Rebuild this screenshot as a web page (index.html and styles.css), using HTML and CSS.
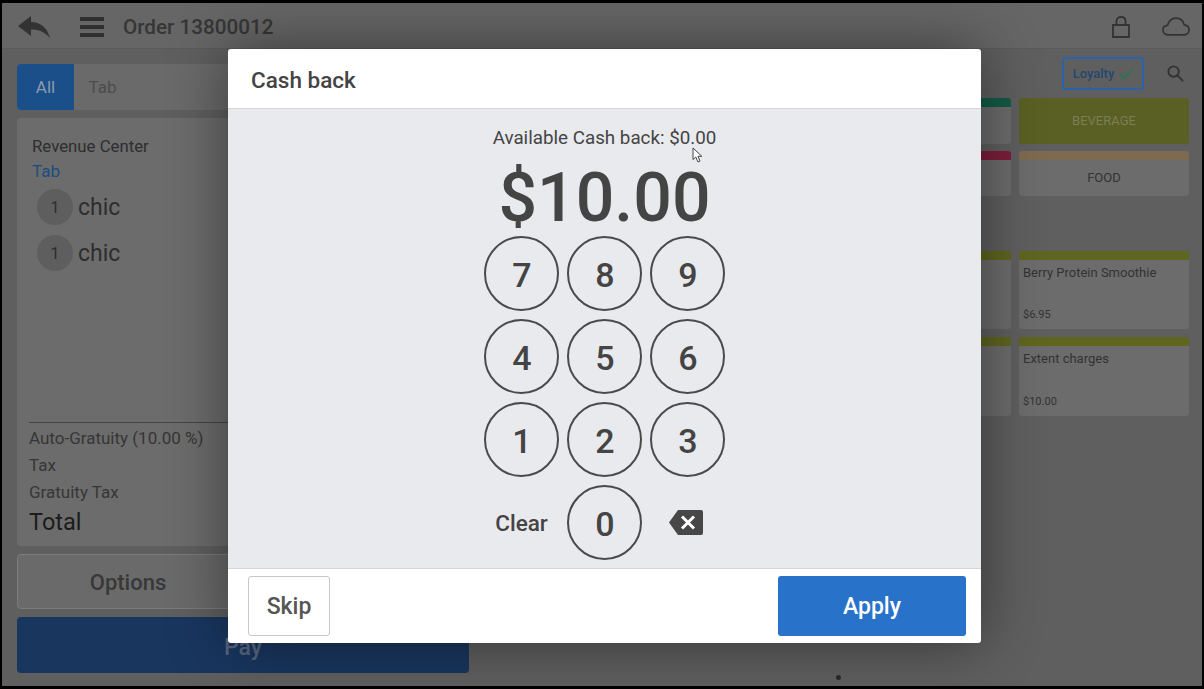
FILE: index.html
```html
<!DOCTYPE html>
<html lang="en">
<head>
  <meta charset="UTF-8">
  <title>Order 13800012 - Cash back</title>
  <link rel="stylesheet" href="styles.css">
</head>
<body>
  <div class="screen">
    <div class="topbar">
      <svg class="back-icon" viewBox="0 0 32 22"><path d="M0 10 L13 0 V6 C22 6 29 11 32 22 C27 16 21 13.500 13 13.500 V20 Z"/></svg>
      <div class="menu-icon"><span></span><span></span><span></span></div>
      <div class="order-title">Order 13800012</div>
      <div class="topbar-right">
        <svg class="lock-icon" viewBox="0 0 18 22"><path d="M1 9 H17 V21 H1 Z M4.500 9 V5 C4.500 2.500 6.500 1 9 1 C11.500 1 13.500 2.500 13.500 5 V9"/></svg>
        <svg class="cloud-icon" viewBox="0 0 30 20"><path d="M7 19 C3.500 19 1 16.800 1 13.800 C1 11 3.200 9 6 8.800 C7.200 4 10.800 1 15 1 C19.500 1 22.800 4 23.800 8.300 C27 8.600 29 10.800 29 13.800 C29 16.800 26.500 19 23 19 Z"/></svg>
      </div>
    </div>

    <div class="main">
      <div class="order-col">
        <div class="tabs">
          <div class="tab tab-active">All</div>
          <div class="tab">Tab</div>
        </div>
        <div class="order-panel">
          <div class="revenue-label">Revenue Center</div>
          <div class="revenue-value">Tab</div>
          <div class="order-item"><span class="qty">1</span><span>chic</span></div>
          <div class="order-item"><span class="qty">1</span><span>chic</span></div>
          <div class="totals">
            <div class="total-line">Auto-Gratuity (10.00 %)</div>
            <div class="total-line">Tax</div>
            <div class="total-line">Gratuity Tax</div>
            <div class="total-big">Total</div>
          </div>
        </div>
        <div class="options-button">Options</div>
        <div class="pay-button">Pay</div>
      </div>

      <div class="menu-col">
        <div class="menu-tools">
          <div class="loyalty">Loyalty
            <svg class="check-icon" viewBox="0 0 16 13"><path d="M1 7 L5.500 11.500 L15 1"/></svg>
          </div>
          <svg class="search-icon" viewBox="0 0 18 18"><circle cx="7" cy="7" r="5.500"/><path d="M11 11 L17 17"/></svg>
        </div>
        <div class="tile-grid">
          <div class="tile stripe-green"></div>
          <div class="tile tile-beverage">BEVERAGE</div>
          <div class="tile stripe-pink"></div>
          <div class="tile stripe-brown tile-center">FOOD</div>
        </div>
        <div class="tile-grid tile-grid-items">
          <div class="tile stripe-olive tile-item">
            <div>Peanut Butter Protein</div>
          </div>
          <div class="tile stripe-olive tile-item">
            <div>Berry Protein Smoothie</div>
            <div class="tile-price">$6.95</div>
          </div>
          <div class="tile stripe-olive tile-item"></div>
          <div class="tile stripe-olive tile-item">
            <div>Extent charges</div>
            <div class="tile-price">$10.00</div>
          </div>
        </div>
        <div class="page-dot"></div>
      </div>
    </div>

    <div class="modal">
      <div class="modal-header">Cash back</div>
      <div class="modal-body">
        <div class="available">Available Cash back: $0.00</div>
        <div class="amount">$10.00</div>
        <div class="keypad">
          <div class="key">7</div>
          <div class="key">8</div>
          <div class="key">9</div>
          <div class="key">4</div>
          <div class="key">5</div>
          <div class="key">6</div>
          <div class="key">1</div>
          <div class="key">2</div>
          <div class="key">3</div>
          <div class="key-plain">Clear</div>
          <div class="key">0</div>
          <div class="key-plain">
            <svg class="backspace-icon" viewBox="0 0 34 25">
              <path class="backspace-shape" d="M9 0 H32 Q34 0 34 2 V23 Q34 25 32 25 H9 L0 12.500 Z"/>
              <path class="backspace-x" d="M13 6.500 L25 18.500 M25 6.500 L13 18.500"/>
            </svg>
          </div>
        </div>
      </div>
      <div class="modal-footer">
        <div class="btn btn-skip">Skip</div>
        <div class="btn btn-apply">Apply</div>
      </div>
    </div>

    <svg class="cursor" viewBox="0 0 11 16"><path d="M1 1 V12.500 L3.800 10 L6 15 L8 14 L6 9.300 L9.800 9.300 Z"/></svg>
  </div>
</body>
</html>
```

FILE: styles.css
```css
body {
  margin: 0;
  background: #000;
  font-family: Roboto, sans-serif;
  overflow: hidden;
}

/* everything behind the dialog is drawn in its dimmed colours */
.screen {
  position: relative;
  width: 1200px;
  height: 683px;
  margin: 3px 2px;
  background: #5f5f5f;
  color: #2e2e2e;
  overflow: hidden;
}

/* top bar */
.topbar {
  display: flex;
  align-items: center;
  height: 43px;
  padding: 2px 12px 0 16px;
  background: #666;
  border-bottom: 1px solid #5a5a5a;
}

.back-icon {
  width: 32px;
  height: 22px;
  fill: #333;
  margin-right: 30px;
}

.menu-icon {
  display: flex;
  flex-direction: column;
  gap: 4px;
  width: 24px;
  margin-right: 19px;
}

.menu-icon span {
  height: 4px;
  background: #303030;
}

.order-title {
  font-size: 20.700px;
  font-weight: 500;
  color: #363636;
}

.topbar-right {
  display: flex;
  align-items: center;
  gap: 32px;
  margin-left: auto;
}

.lock-icon {
  width: 18px;
  height: 22px;
  fill: none;
  stroke: #333;
  stroke-width: 1.800;
}

.cloud-icon {
  width: 28px;
  height: 19px;
  fill: none;
  stroke: #333;
  stroke-width: 1.800;
}

/* main columns */
.main {
  display: flex;
  justify-content: space-between;
  padding: 8px 13px 0 15px;
}

.order-col {
  width: 452px;
  padding-top: 7px;
}

.tabs {
  display: flex;
  height: 46px;
  background: #6a6a6a;
  border-radius: 4px;
  margin-bottom: 8px;
}

.tab {
  display: flex;
  align-items: center;
  justify-content: center;
  width: 57px;
  font-size: 17px;
  color: #4c4c4c;
}

.tab-active {
  background: #1b4f8a;
  color: #8d9aaa;
  border-radius: 4px 0 0 4px;
}

.order-panel {
  display: flex;
  flex-direction: column;
  height: 428px;
  box-sizing: border-box;
  padding: 18px 12px 0;
  background: #6c6c6c;
  border-radius: 4px;
  margin-bottom: 8px;
}

.revenue-label {
  font-size: 16.800px;
  line-height: 20px;
  padding-left: 3px;
}

.revenue-value {
  font-size: 17px;
  line-height: 26px;
  margin-top: 2px;
  padding-left: 3px;
  color: #1d4c80;
}

.order-item {
  display: flex;
  align-items: center;
  gap: 5px;
  height: 46px;
  padding-left: 8px;
  font-size: 23px;
}

.qty {
  display: flex;
  align-items: center;
  justify-content: center;
  width: 36px;
  height: 36px;
  border-radius: 50%;
  background: #5e5e5e;
  font-size: 16px;
}

.totals {
  margin-top: auto;
  padding-top: 2px;
  padding-bottom: 7px;
  border-top: 1px solid #444;
  font-size: 17px;
  color: #363636;
}

.total-line {
  line-height: 27px;
}

.total-big {
  font-size: 23.500px;
  line-height: 33px;
  color: #1c1c1c;
}

.options-button {
  display: flex;
  align-items: center;
  justify-content: center;
  height: 55px;
  box-sizing: border-box;
  padding: 1px 230px 0 0;
  margin-bottom: 8px;
  background: #6a6a6a;
  border: 1px solid #7c7c7c;
  border-radius: 4px;
  font-size: 22px;
  font-weight: 500;
  color: #383838;
}

.pay-button {
  display: flex;
  align-items: center;
  justify-content: center;
  height: 56px;
  background: #19365f;
  border-radius: 4px;
  font-size: 23px;
  font-weight: 500;
  padding-top: 4px;
  box-sizing: border-box;
  color: #56677f;
}

/* menu side */
.menu-col {
  position: relative;
  width: 348px;
}

.menu-tools {
  display: flex;
  justify-content: flex-end;
  align-items: center;
  gap: 23px;
  height: 33px;
  margin-bottom: 8px;
  padding-right: 5px;
}

.loyalty {
  display: flex;
  align-items: center;
  justify-content: center;
  gap: 5px;
  width: 82px;
  height: 33px;
  box-sizing: border-box;
  border: 2px solid #2a63a8;
  border-radius: 4px;
  font-size: 13px;
  font-weight: 500;
  color: #24486f;
}

.check-icon {
  width: 14px;
  height: 12px;
  fill: none;
  stroke: #1f7a50;
  stroke-width: 1.700;
}

.search-icon {
  width: 17px;
  height: 17px;
  fill: none;
  stroke: #333;
  stroke-width: 2;
}

.tile-grid {
  display: grid;
  grid-template-columns: 170px 170px;
  grid-template-rows: 46px 45px;
  gap: 7px 8px;
  margin-bottom: 55px;
}

.tile-grid-items {
  grid-template-rows: 78px 79px;
  gap: 8px;
}

.tile {
  box-sizing: border-box;
  background: #6c6c6c;
  border-radius: 3px;
  border-top: 9px solid transparent;
  font-size: 13px;
  color: #333;
}

.stripe-green { border-top-color: #145c46; }
.stripe-pink { border-top-color: #7e1e3c; }
.stripe-brown { border-top-color: #7d6a50; }
.stripe-olive { border-top-color: #60651f; }

.tile-beverage {
  display: flex;
  align-items: center;
  justify-content: center;
  padding-bottom: 2px;
  border-top: 0;
  background: #5a5f23;
  color: #7b7e56;
}

.tile-center {
  display: flex;
  align-items: center;
  justify-content: center;
  padding-bottom: 2px;
}

.tile-item {
  display: flex;
  flex-direction: column;
  padding: 5px 4px 8px;
  white-space: nowrap;
}

.tile-price {
  font-size: 11px;
  margin-top: auto;
}

.page-dot {
  position: absolute;
  left: -5px;
  top: 618px;
  width: 5px;
  height: 5px;
  border-radius: 50%;
  background: #2a2a2a;
}

/* cash back dialog */
.modal {
  position: absolute;
  left: 226px;
  top: 46px;
  width: 753px;
  height: 594px;
  display: flex;
  flex-direction: column;
  background: #fff;
  border-radius: 3px;
  box-shadow: 0 0 60px rgba(0, 0, 0, 0.45);
  color: #444;
}

.modal-header {
  display: flex;
  align-items: center;
  height: 60px;
  padding: 2px 0 0 23px;
  box-sizing: border-box;
  font-size: 22.500px;
  font-weight: 500;
  border-bottom: 1px solid #d6d6d6;
}

.modal-body {
  flex: 1;
  display: flex;
  flex-direction: column;
  align-items: center;
  background: #e9eaee;
  border-bottom: 1px solid #d6d6d6;
}

.available {
  font-size: 18.800px;
  line-height: 22px;
  margin-top: 18px;
}

.amount {
  font-size: 68px;
  font-weight: 500;
  line-height: 74px;
  margin-top: 12px;
  margin-bottom: 1px;
}

.keypad {
  display: grid;
  grid-template-columns: repeat(3, 75px);
  grid-auto-rows: 75px;
  gap: 8px;
}

.key {
  display: flex;
  align-items: center;
  justify-content: center;
  box-sizing: border-box;
  padding: 3px 0 0 1px;
  border: 2px solid #4a4a4a;
  border-radius: 50%;
  font-size: 34px;
  font-weight: 500;
}

.key-plain {
  display: flex;
  align-items: center;
  justify-content: center;
  font-size: 22.500px;
  font-weight: 500;
}

.backspace-icon {
  width: 34px;
  height: 25px;
  margin-right: 4px;
}

.backspace-shape {
  fill: #474747;
}

.backspace-x {
  fill: none;
  stroke: #fff;
  stroke-width: 3;
}

.modal-footer {
  display: flex;
  justify-content: space-between;
  align-items: center;
  height: 74px;
  padding: 0 15px 1px 20px;
  box-sizing: border-box;
}

.btn {
  display: flex;
  align-items: center;
  justify-content: center;
  height: 60px;
  padding-top: 1px;
  box-sizing: border-box;
  border-radius: 3px;
  font-size: 23px;
  font-weight: 500;
}

.btn-skip {
  width: 82px;
  border: 1px solid #c8c8c8;
  color: #555;
}

.btn-apply {
  width: 188px;
  background: #2872ca;
  color: #fff;
}

.cursor {
  position: absolute;
  left: 690px;
  top: 144px;
  width: 11px;
  height: 16px;
  fill: #fff;
  stroke: #444;
  stroke-width: 1;
}
```
